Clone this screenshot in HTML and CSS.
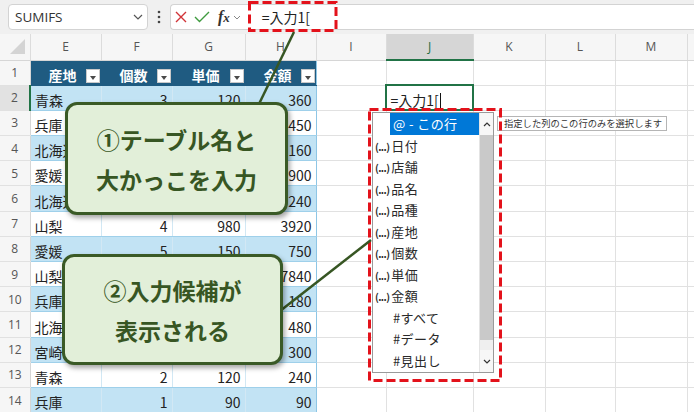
FILE: index.html
```html
<!DOCTYPE html>
<html lang="ja">
<head>
<meta charset="utf-8">
<title>テーブルの構造化参照</title>
<link rel="stylesheet" href="styles.css">
</head>
<body>
<div class="toolbar">
  <div class="namebox"><span>SUMIFS</span><svg class="chev" width="10" height="6" viewBox="0 0 10 6"><path d="M1 1L5 5L9 1" fill="none" stroke="#555" stroke-width="1.2"/></svg></div>
  <div class="vdots"><svg width="4" height="14" viewBox="0 0 4 14"><circle cx="2" cy="2" r="1.3"/><circle cx="2" cy="7" r="1.3"/><circle cx="2" cy="12" r="1.3"/></svg></div>
  <div class="fbar">
    <svg class="ic-x" width="12" height="12" viewBox="0 0 12 12"><path d="M1 1L11 11M11 1L1 11" stroke="#d13438" stroke-width="1.4" fill="none"/></svg>
    <svg class="ic-ok" width="16" height="12" viewBox="0 0 16 12"><path d="M1 6L5.5 10.5L15 1" stroke="#3f9b3f" stroke-width="1.4" fill="none"/></svg>
    <span class="fx"><i>f</i><i class="x">x</i></span>
    <svg class="chev2" width="8" height="5" viewBox="0 0 8 5"><path d="M1 1L4 4L7 1" fill="none" stroke="#888" stroke-width="1"/></svg>
    <span class="formula">=入力1[</span>
  </div>
</div>

<table class="sheet">
  <colgroup>
    <col class="w30"><col class="w71"><col class="w71"><col class="w73"><col class="w71"><col class="w70"><col class="w87"><col class="w72"><col class="w70"><col class="w72"><col class="w30">
  </colgroup>
  <thead>
    <tr><th class="corner"><div class="corner-in"><span class="tri"></span></div></th><th>E</th><th>F</th><th>G</th><th>H</th><th>I</th><th class="colsel">J</th><th>K</th><th>L</th><th>M</th><th></th></tr>
  </thead>
  <tbody>
    <tr class="hdr"><th class="rn">1</th><td class="th">産地<span class="fb"></span></td><td class="th">個数<span class="fb"></span></td><td class="th">単価<span class="fb"></span></td><td class="th last">金額<span class="fb"></span></td><td></td><td></td><td></td><td></td><td></td><td></td></tr>
    <tr class="band"><th class="rn act">2</th><td class="t">青森</td><td class="t n">3</td><td class="t n">120</td><td class="t n last">360</td><td></td><td class="active">=入力1[<span class="caret"></span></td><td></td><td></td><td></td><td></td></tr>
    <tr><th class="rn">3</th><td class="t">兵庫</td><td class="t n"></td><td class="t n"></td><td class="t n last">450</td><td></td><td></td><td></td><td></td><td></td><td></td></tr>
    <tr class="band"><th class="rn">4</th><td class="t">北海道</td><td class="t n"></td><td class="t n"></td><td class="t n last">160</td><td></td><td></td><td></td><td></td><td></td><td></td></tr>
    <tr><th class="rn">5</th><td class="t">愛媛</td><td class="t n"></td><td class="t n"></td><td class="t n last">900</td><td></td><td></td><td></td><td></td><td></td><td></td></tr>
    <tr class="band"><th class="rn">6</th><td class="t">北海道</td><td class="t n"></td><td class="t n"></td><td class="t n last">240</td><td></td><td></td><td></td><td></td><td></td><td></td></tr>
    <tr><th class="rn">7</th><td class="t">山梨</td><td class="t n">4</td><td class="t n">980</td><td class="t n last">3920</td><td></td><td></td><td></td><td></td><td></td><td></td></tr>
    <tr class="band"><th class="rn">8</th><td class="t">愛媛</td><td class="t n">5</td><td class="t n">150</td><td class="t n last">750</td><td></td><td></td><td></td><td></td><td></td><td></td></tr>
    <tr><th class="rn">9</th><td class="t">山梨</td><td class="t n"></td><td class="t n"></td><td class="t n last">7840</td><td></td><td></td><td></td><td></td><td></td><td></td></tr>
    <tr class="band"><th class="rn">10</th><td class="t">兵庫</td><td class="t n"></td><td class="t n"></td><td class="t n last">180</td><td></td><td></td><td></td><td></td><td></td><td></td></tr>
    <tr><th class="rn">11</th><td class="t">北海道</td><td class="t n"></td><td class="t n"></td><td class="t n last">480</td><td></td><td></td><td></td><td></td><td></td><td></td></tr>
    <tr class="band"><th class="rn">12</th><td class="t">宮崎</td><td class="t n"></td><td class="t n"></td><td class="t n last">300</td><td></td><td></td><td></td><td></td><td></td><td></td></tr>
    <tr><th class="rn">13</th><td class="t">青森</td><td class="t n">2</td><td class="t n">120</td><td class="t n last">240</td><td></td><td></td><td></td><td></td><td></td><td></td></tr>
    <tr class="band"><th class="rn">14</th><td class="t">兵庫</td><td class="t n">1</td><td class="t n">90</td><td class="t n last">90</td><td></td><td></td><td></td><td></td><td></td><td></td></tr>
  </tbody>
</table>

<div class="ac">
  <ul class="ac-list">
    <li class="ac-sel"><span>@ - この行</span></li>
    <li><span class="dots">(...)</span>日付</li>
    <li><span class="dots">(...)</span>店舗</li>
    <li><span class="dots">(...)</span>品名</li>
    <li><span class="dots">(...)</span>品種</li>
    <li><span class="dots">(...)</span>産地</li>
    <li><span class="dots">(...)</span>個数</li>
    <li><span class="dots">(...)</span>単価</li>
    <li><span class="dots">(...)</span>金額</li>
    <li class="ac-hash">#すべて</li>
    <li class="ac-hash">#データ</li>
    <li class="ac-hash">#見出し</li>
  </ul>
  <div class="ac-scroll">
    <div class="sb-btn"><svg width="8" height="5" viewBox="0 0 8 5"><path d="M1 4L4 1L7 4" fill="none" stroke="#333" stroke-width="1.2"/></svg></div>
    <div class="sb-thumb"></div>
    <div class="sb-track"></div>
    <div class="sb-btn"><svg width="8" height="5" viewBox="0 0 8 5"><path d="M1 1L4 4L7 1" fill="none" stroke="#333" stroke-width="1.2"/></svg></div>
  </div>
</div>

<div class="tip">指定した列のこの行のみを選択します</div>

<svg class="marks" width="694" height="412" viewBox="0 0 694 412">
  <rect x="249.5" y="2.5" width="86.5" height="28" fill="none" stroke="#e3121b" stroke-width="3" stroke-dasharray="9 4"/>
  <rect x="369.5" y="109.5" width="131" height="271" fill="none" stroke="#e3121b" stroke-width="3" stroke-dasharray="9 4"/>
  <line x1="294" y1="32" x2="258" y2="106" stroke="#375623" stroke-width="2.5"/>
  <line x1="280" y1="311" x2="371" y2="240" stroke="#375623" stroke-width="2.5"/>
</svg>

<div class="callout c1"><p>①テーブル名と</p><p>大かっこを入力</p></div>
<div class="callout c2"><p>②入力候補が</p><p>表示される</p></div>
</body>
</html>
```

FILE: styles.css
```css
* { box-sizing: border-box; margin: 0; padding: 0; }
html, body { width: 694px; height: 412px; overflow: hidden; background: #fff; }
body { position: relative; font-family: "Noto Sans CJK JP", "Noto Sans", sans-serif; color: #222; }

/* toolbar */
.toolbar { height: 34px; background: #f0f0f0; display: flex; align-items: flex-start; padding: 4px 0 0 8px; }
.namebox { width: 140px; height: 26px; background: #fff; border: 1px solid #d3d3d3; border-radius: 4px;
  display: flex; align-items: center; justify-content: space-between; padding: 0 4px 0 6px;
  font-family: "Open Sans", "Noto Sans", sans-serif; font-size: 13.5px; color: #333; }
.vdots { width: 22px; height: 26px; display: flex; align-items: center; justify-content: center; fill: #444; }
.fbar { flex: 1; height: 26px; background: #fff; border: 1px solid #d3d3d3; border-right: none; border-radius: 4px 0 0 4px;
  display: flex; align-items: center; padding-left: 4px; }
.ic-ok { margin-left: 7px; }
.fx { margin-left: 8px; font-family: "Liberation Serif", serif; font-weight: 700; font-size: 16px; color: #333; line-height: 1; }
.fx .x { font-size: 13px; }
.chev2 { margin-left: 3px; }
.formula { margin-left: 21px; font-size: 14px; color: #222; }

/* sheet */
.sheet { border-collapse: collapse; table-layout: fixed; width: 717px; font-size: 14px; color: #222; }
.w30 { width: 30px; } .w70 { width: 70px; } .w71 { width: 71px; } .w72 { width: 72px; } .w73 { width: 73px; } .w87 { width: 87px; }
.sheet th, .sheet td { padding: 0; border-right: 1px solid #e1e1e1; border-bottom: 1px solid #e1e1e1; white-space: nowrap; overflow: hidden; }
.sheet thead th { height: 26px; background: #f6f6f6; font: 400 12px "Open Sans", "Noto Sans", sans-serif; color: #555;
  text-align: center; vertical-align: middle; border-right: 1px solid #dcdcdc; border-bottom: 1px solid #d6d6d6; }
.sheet thead th.colsel { background: #d6d6d6; color: #1e6b41; border-bottom: 2px solid #217346; }
.corner-in { height: 25px; display: flex; align-items: flex-end; justify-content: flex-end; padding: 0 5px 5px 0; }
.tri { width: 0; height: 0; border-left: 15px solid transparent; border-bottom: 15px solid #d4d4d4; }
.sheet tbody tr { height: 25.2px; }
.sheet td { vertical-align: bottom; line-height: 20px; padding: 0 4px; }
.sheet th.rn { background: #f6f6f6; font: 400 12px "Open Sans", "Noto Sans", sans-serif; color: #555; text-align: center;
  vertical-align: middle; border-right: 1px solid #d6d6d6; }
.sheet th.rn.act { background: #e2e2e2; border-right: 2px solid #217346; }

/* excel table style */
.sheet td.th { position: relative; background: #1f5b81; color: #fff; font-weight: 700; text-align: center; padding: 0 6px 0 0;
  border-right: 1px solid #1f5b81; border-bottom: 1px solid #1f5b81; }
.fb { position: absolute; right: 1px; bottom: 2px; width: 14px; height: 14px; background: #fff; border: 1px solid #c9c9c9; }
.fb::after { content: ""; position: absolute; left: 3px; top: 6px; border-left: 3.5px solid transparent; border-right: 3.5px solid transparent; border-top: 4px solid #4a4a4a; }
.sheet td.t { border-right: 1px solid #d2e8f4; border-bottom: 1px solid #9fd0ea; }
.band td.t { background: #c2e3f4; }
.sheet td.last { border-right: 1px solid #8ec6e5; }
.sheet td.n { text-align: right; }
.sheet td.active { outline: 2px solid #217346; outline-offset: -1px; overflow: visible; }
.caret { display: inline-block; width: 1px; height: 15px; background: #111; vertical-align: -2px; margin-left: 1px; }

/* autocomplete list */
.ac { position: absolute; left: 372px; top: 112px; width: 122px; height: 261px; background: #fff; border: 1px solid #9a9a9a; display: flex; }
.ac-list { list-style: none; flex: 1; padding-top: 0; }
.ac-list li { height: 21.5px; line-height: 21.5px; font-size: 13px; letter-spacing: 0.4px; color: #2a2a2a; padding-left: 2px; white-space: nowrap; }
.dots { font-size: 10px; font-weight: 700; letter-spacing: -0.6px; margin-right: 2px; }
.ac-sel { padding-left: 17px !important; }
.ac-sel span { display: block; background: #0078d7; color: #fff; padding-left: 3px; height: 22px; }
.ac-hash { padding-left: 20px !important; }
.ac-scroll { width: 14px; display: flex; flex-direction: column; border-left: 1px solid #e4e4e4; }
.sb-btn { height: 22px; display: flex; align-items: center; justify-content: center; background: #f7f7f7; }
.sb-thumb { height: 205px; background: #c9c9c9; }
.sb-track { flex: 1; background: #efefef; }

.tip { position: absolute; left: 497px; top: 116px; width: 170px; height: 15px; background: #fff; border: 1px solid #b5b5b5;
  font-size: 9.3px; line-height: 13px; color: #333; padding-left: 6px; white-space: nowrap; }

.marks { position: absolute; left: 0; top: 0; }

/* callouts */
.callout { position: absolute; background: #e2efd9; border: 3px solid #3a5a26; border-radius: 12px;
  box-shadow: 2px 3px 5px rgba(0, 0, 0, 0.35); display: flex; flex-direction: column; justify-content: center; align-items: center;
  color: #375623; font-weight: 700; font-size: 23px; line-height: 40px; }
.c1 { left: 65px; top: 102px; width: 223px; height: 113px; }
.c2 { left: 62px; top: 254px; width: 221px; height: 111px; }
```
